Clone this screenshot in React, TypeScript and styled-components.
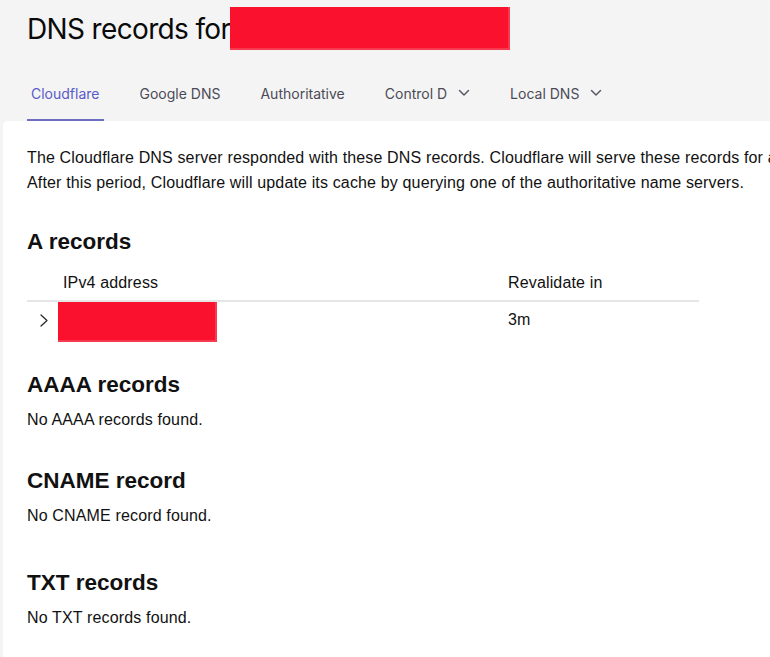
import React from "react";
import { styled, createGlobalStyle } from "styled-components";

const GlobalStyle = createGlobalStyle`
  html, body {
    margin: 0;
    padding: 0;
    background: #f4f4f5;
  }
  * {
    box-sizing: border-box;
  }
`;

const Page = styled.div`
  width: 770px;
  height: 657px;
  overflow: hidden;
  padding-left: 3px;
  display: flex;
  flex-direction: column;
  font-family: "Liberation Sans", Arial, sans-serif;
  color: #111;
`;

const Header = styled.header`
  padding: 7px 0 0 24px;
  display: flex;
  flex-direction: column;
`;

const Title = styled.h1`
  margin: 0;
  display: flex;
  align-items: center;
  height: 43px;
  font-family: Inter, "Liberation Sans", sans-serif;
  font-size: 28px;
  font-weight: 400;
  letter-spacing: -0.65px;
  color: #0a0a0a;
`;

const Redacted = styled.span<{ $w: number; $h: number }>`
  display: inline-block;
  width: ${(p) => p.$w}px;
  height: ${(p) => p.$h}px;
  background: #f9112d;
  box-shadow: inset -2px -2px 0 #f63a50;
`;

const Tabs = styled.nav`
  margin-top: 19px;
  display: flex;
  gap: 32px;
`;

const Tab = styled.div<{ $active?: boolean }>`
  height: 52px;
  padding: 0 4px 2px;
  display: flex;
  align-items: center;
  gap: 11px;
  font-family: Inter, "Liberation Sans", sans-serif;
  font-size: 14px;
  color: ${(p) => (p.$active ? "#5a5ac8" : "#4b4b55")};
  border-bottom: 2px solid ${(p) => (p.$active ? "#6d6dc6" : "transparent")};
`;

const Panel = styled.main`
  flex: 1;
  background: #fff;
  border-top-left-radius: 5px;
  padding: 24px 0 0 24px;
`;

const Intro = styled.p`
  margin: 0;
  font-size: 16px;
  line-height: 25px;
  letter-spacing: 0.15px;
  white-space: nowrap;
`;

const Section = styled.section<{ $top: number }>`
  margin-top: ${(p) => p.$top}px;
`;

const Heading = styled.h2`
  margin: 0;
  font-size: 22.5px;
  line-height: 28px;
  font-weight: 700;
`;

const Empty = styled.p`
  margin: 8px 0 0;
  font-size: 16px;
  line-height: 25px;
  letter-spacing: 0.15px;
`;

const Table = styled.div`
  width: 672px;
  margin-top: 9px;
  font-size: 16px;
  letter-spacing: 0.15px;
`;

const HeadRow = styled.div`
  display: grid;
  grid-template-columns: 36px 445px 1fr;
  align-items: center;
  height: 37px;
  border-bottom: 2px solid #e6e6e6;
`;

const BodyRow = styled.div`
  display: grid;
  grid-template-columns: 36px 445px 1fr;
  align-items: start;
  height: 41px;
`;

const Cell = styled.div`
  display: flex;
  align-items: center;
  height: 36px;
`;

const RowToggle = styled(Cell)`
  padding-left: 13px;
`;

const Shift = styled.div`
  margin-left: -5px;
  display: flex;
  align-self: flex-start;
`;

const ChevronDown = () => (
  <svg width="12" height="8" viewBox="0 0 12 8" fill="none">
    <polyline points="1.5,1.5 6,6 10.5,1.5" stroke="#5a5a64" strokeWidth="1.5" strokeLinecap="round" strokeLinejoin="round" />
  </svg>
);

const ChevronRight = () => (
  <svg width="8" height="13" viewBox="0 0 8 13" fill="none">
    <polyline points="1,1 7,6.5 1,12" stroke="#222" strokeWidth="1.2" strokeLinecap="round" strokeLinejoin="round" />
  </svg>
);

const tabs = [
  { label: "Cloudflare", active: true },
  { label: "Google DNS" },
  { label: "Authoritative" },
  { label: "Control D", menu: true },
  { label: "Local DNS", menu: true },
];

export default function App() {
  return (
    <>
      <GlobalStyle />
      <Page>
        <Header>
          <Title>
            DNS records for
            <Redacted $w={280} $h={43} />
          </Title>
          <Tabs>
            {tabs.map((t) => (
              <Tab key={t.label} $active={t.active}>
                {t.label}
                {t.menu && <ChevronDown />}
              </Tab>
            ))}
          </Tabs>
        </Header>
        <Panel>
          <Intro>
            The Cloudflare DNS server responded with these DNS records. Cloudflare will serve these records for a
            period of time.
            <br />
            After this period, Cloudflare will update its cache by querying one of the authoritative name servers.
          </Intro>

          <Section $top={33}>
            <Heading>A records</Heading>
            <Table>
              <HeadRow>
                <Cell />
                <Cell>IPv4 address</Cell>
                <Cell>Revalidate in</Cell>
              </HeadRow>
              <BodyRow>
                <RowToggle>
                  <ChevronRight />
                </RowToggle>
                <Cell>
                  <Shift>
                    <Redacted $w={159} $h={40} />
                  </Shift>
                </Cell>
                <Cell>3m</Cell>
              </BodyRow>
            </Table>
          </Section>

          <Section $top={28}>
            <Heading>AAAA records</Heading>
            <Empty>No AAAA records found.</Empty>
          </Section>

          <Section $top={35}>
            <Heading>CNAME record</Heading>
            <Empty>No CNAME record found.</Empty>
          </Section>

          <Section $top={41}>
            <Heading>TXT records</Heading>
            <Empty>No TXT records found.</Empty>
          </Section>
        </Panel>
      </Page>
    </>
  );
}
